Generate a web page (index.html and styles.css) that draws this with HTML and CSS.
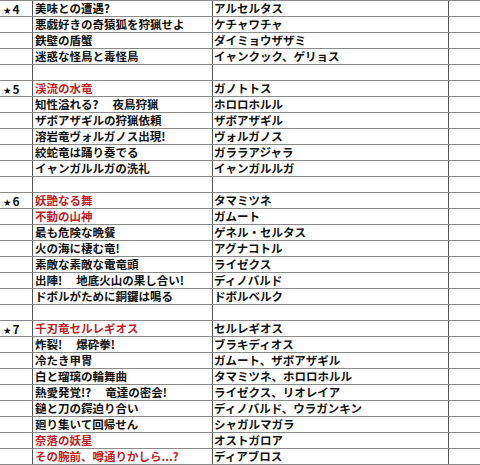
FILE: index.html
```html
<!DOCTYPE html>
<html lang="ja">
<head>
<meta charset="utf-8">
<link rel="stylesheet" href="styles.css">
</head>
<body>
<div class="sheet">
  <div class="row"><div class="c star"><span class="glyph">★</span>4</div><div class="c t">美味との遭遇?</div><div class="c m">アルセルタス</div><div class="c e"></div></div>
  <div class="row"><div class="c star"></div><div class="c t">悪戯好きの奇猿狐を狩猟せよ</div><div class="c m">ケチャワチャ</div><div class="c e"></div></div>
  <div class="row"><div class="c star"></div><div class="c t">鉄壁の盾蟹</div><div class="c m">ダイミョウザザミ</div><div class="c e"></div></div>
  <div class="row"><div class="c star"></div><div class="c t">迷惑な怪鳥と毒怪鳥</div><div class="c m">イャンクック、ゲリョス</div><div class="c e"></div></div>
  <div class="row"><div class="c star"></div><div class="c t"></div><div class="c m"></div><div class="c e"></div></div>
  <div class="row"><div class="c star"><span class="glyph">★</span>5</div><div class="c t red">渓流の水竜</div><div class="c m">ガノトトス</div><div class="c e"></div></div>
  <div class="row"><div class="c star"></div><div class="c t">知性溢れる?　 夜鳥狩猟</div><div class="c m">ホロロホルル</div><div class="c e"></div></div>
  <div class="row"><div class="c star"></div><div class="c t">ザボアザギルの狩猟依頼</div><div class="c m">ザボアザギル</div><div class="c e"></div></div>
  <div class="row"><div class="c star"></div><div class="c t">溶岩竜ヴォルガノス出現!</div><div class="c m">ヴォルガノス</div><div class="c e"></div></div>
  <div class="row"><div class="c star"></div><div class="c t">絞蛇竜は踊り奏でる</div><div class="c m">ガララアジャラ</div><div class="c e"></div></div>
  <div class="row"><div class="c star"></div><div class="c t">イャンガルルガの洗礼</div><div class="c m">イャンガルルガ</div><div class="c e"></div></div>
  <div class="row"><div class="c star"></div><div class="c t"></div><div class="c m"></div><div class="c e"></div></div>
  <div class="row"><div class="c star"><span class="glyph">★</span>6</div><div class="c t red">妖艶なる舞</div><div class="c m">タマミツネ</div><div class="c e"></div></div>
  <div class="row"><div class="c star"></div><div class="c t red">不動の山神</div><div class="c m">ガムート</div><div class="c e"></div></div>
  <div class="row"><div class="c star"></div><div class="c t">最も危険な晩餐</div><div class="c m">ゲネル・セルタス</div><div class="c e"></div></div>
  <div class="row"><div class="c star"></div><div class="c t">火の海に棲む竜!</div><div class="c m">アグナコトル</div><div class="c e"></div></div>
  <div class="row"><div class="c star"></div><div class="c t">素敵な素敵な電竜頭</div><div class="c m">ライゼクス</div><div class="c e"></div></div>
  <div class="row"><div class="c star"></div><div class="c t">出陣!　 地底火山の果し合い!</div><div class="c m">ディノバルド</div><div class="c e"></div></div>
  <div class="row"><div class="c star"></div><div class="c t">ドボルがために銅鑼は鳴る</div><div class="c m">ドボルベルク</div><div class="c e"></div></div>
  <div class="row"><div class="c star"></div><div class="c t"></div><div class="c m"></div><div class="c e"></div></div>
  <div class="row"><div class="c star"><span class="glyph">★</span>7</div><div class="c t red">千刃竜セルレギオス</div><div class="c m">セルレギオス</div><div class="c e"></div></div>
  <div class="row"><div class="c star"></div><div class="c t">炸裂!　 爆砕拳!</div><div class="c m">ブラキディオス</div><div class="c e"></div></div>
  <div class="row"><div class="c star"></div><div class="c t">冷たき甲冑</div><div class="c m">ガムート、ザボアザギル</div><div class="c e"></div></div>
  <div class="row"><div class="c star"></div><div class="c t">白と瑠璃の輪舞曲</div><div class="c m">タマミツネ、ホロロホルル</div><div class="c e"></div></div>
  <div class="row"><div class="c star"></div><div class="c t">熱愛発覚!?　 竜達の密会!</div><div class="c m">ライゼクス、リオレイア</div><div class="c e"></div></div>
  <div class="row"><div class="c star"></div><div class="c t">鎚と刀の鍔迫り合い</div><div class="c m">ディノバルド、ウラガンキン</div><div class="c e"></div></div>
  <div class="row"><div class="c star"></div><div class="c t">廻り集いて回帰せん</div><div class="c m">シャガルマガラ</div><div class="c e"></div></div>
  <div class="row"><div class="c star"></div><div class="c t red">奈落の妖星</div><div class="c m">オストガロア</div><div class="c e"></div></div>
  <div class="row"><div class="c star"></div><div class="c t red">その腕前、噂通りかしら...?</div><div class="c m">ディアブロス</div><div class="c e"></div></div>
</div>
</body>
</html>
```
FILE: styles.css
```css
html, body {
  margin: 0;
  padding: 0;
  background: #ffffff;
}

.sheet {
  width: 480px;
  overflow: hidden;
  border-bottom: 1px solid #8a8a8a;
  font-family: "Noto Sans CJK JP", "Noto Sans", sans-serif;
  font-weight: 700;
  font-size: 11.5px;
  color: #111111;
}

.row {
  display: grid;
  grid-template-columns: 32px 180px 236px 1fr;
  height: 16px;
  box-sizing: border-box;
  border-top: 1px solid #8a8a8a;
}

.c {
  line-height: 15px;
  white-space: pre;
  overflow: hidden;
}

.star {
  padding-left: 3px;
  font-family: "Noto Sans CJK JP", "Noto Sans", sans-serif;
  font-size: 12px;
}

.glyph {
  font-family: "DejaVu Sans", sans-serif;
  font-size: 9.5px;
  margin-right: 1px;
}

.t, .m, .e {
  border-left: 1px solid #555555;
}

.t {
  padding-left: 2px;
}

.m {
  padding-left: 1px;
}

.red {
  color: #c01f28;
}
```
